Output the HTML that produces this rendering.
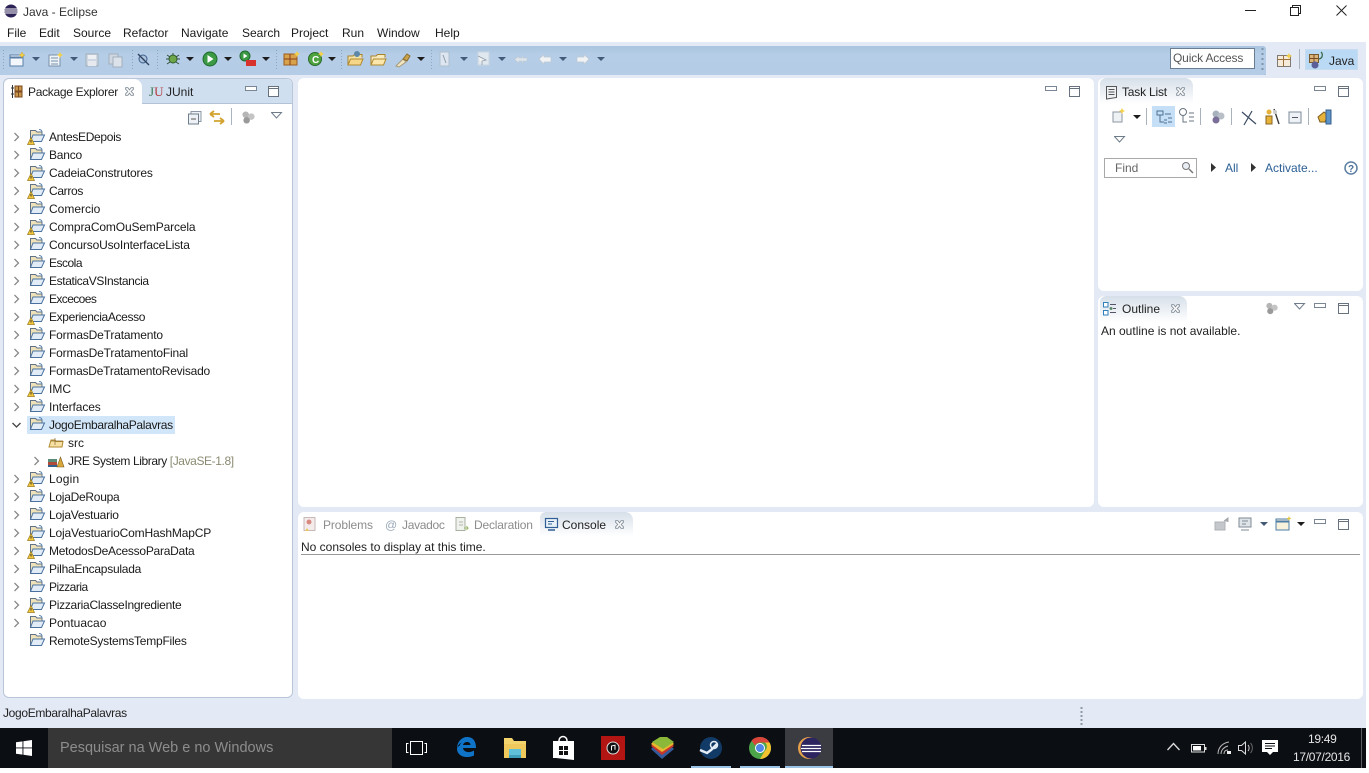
<!DOCTYPE html>
<html><head><meta charset="utf-8"><title>Java - Eclipse</title>
<style>
html,body{margin:0;padding:0;background:#fff}
#r{position:relative;width:1369px;height:773px;overflow:hidden;background:#fff;font-family:"Liberation Sans",sans-serif;font-size:12px;color:#1a1a1a}
#w{position:absolute;left:0;top:0;width:1366px;height:768px;overflow:hidden;background:#e3e9f5}
.a{position:absolute}
.t{position:absolute;white-space:nowrap;line-height:16px;height:16px}
.g{color:#8c8c8c}
.p{position:absolute;background:#fff;border-radius:6px}
svg{position:absolute;overflow:visible}
</style></head><body><div id="r"><div id="w">
<svg width="0" height="0" style="position:absolute">
<defs>
<symbol id="fo" viewBox="0 0 18 16"><path d="M2.500 13.500V2.500h5l1.500 1.500h5v3" fill="#efe2b8" stroke="#5f7288"/><path d="M2.500 13.500l2.500-6.500h11.500l-3 6.500z" fill="#e2ecf6" stroke="#4a72a0"/><path d="M11 1.500c2 0 3 1 3 3" fill="none" stroke="#5c86b0"/></symbol>
<symbol id="wa" viewBox="0 0 8 8"><path d="M4 .5L7.500 7.500H.5z" fill="#f5c83c" stroke="#9a7b1c" stroke-width=".7"/><path d="M4 3v2.500" stroke="#333"/></symbol>
<symbol id="ch" viewBox="0 0 8 10"><path d="M1.500 1l4 4-4 4" fill="none" stroke="#8a8a8a" stroke-width="1.300"/></symbol>
<symbol id="cl" viewBox="0 0 10 10"><path d="M1.500 1.500l2 0 1.500 2 1.500-2 2 0 0 1.500-2 2 2 2 0 1.500-2 0-1.500-2-1.500 2-2 0 0-1.500 2-2-2-2z" fill="#fff" stroke="#7f8a96" stroke-width=".8"/></symbol>
<symbol id="mn" viewBox="0 0 12 6"><rect x=".5" y=".5" width="11" height="4" fill="#fff" stroke="#7a8694"/></symbol>
<symbol id="mx" viewBox="0 0 11 11"><rect x=".5" y=".5" width="10" height="10" fill="#fff" stroke="#68727e"/><path d="M.5 2.500h10" stroke="#68727e"/></symbol>
<symbol id="dd" viewBox="0 0 8 4"><path d="M0 0h8L4 4z" fill="#445a78"/></symbol>
<symbol id="db" viewBox="0 0 8 4"><path d="M0 0h8L4 4z" fill="#1c1c1c"/></symbol>
<symbol id="tv" viewBox="0 0 12 7"><path d="M.5.500h10L5.500 6z" fill="#fff" stroke="#6f7c8a"/></symbol>
<symbol id="gr" viewBox="0 0 16 14"><circle cx="5" cy="4" r="3.500" fill="#b6b6b6"/><circle cx="11" cy="6" r="3.500" fill="#c4c4c4"/><circle cx="6" cy="10" r="3.500" fill="#9a9a9a"/></symbol>
</defs></svg>

<!-- title bar -->
<div class="a" style="left:0;top:0;width:1366px;height:42px;background:#fff"></div>
<svg style="left:4px;top:4px" width="14" height="14" viewBox="0 0 14 14"><circle cx="7" cy="7" r="6.500" fill="#2c2255"/><path d="M.8 5h12.400M.5 7h13M.8 9h12.400" stroke="#fff"/></svg>
<div class="t" style="left:23px;top:4px;color:#333">Java - Eclipse</div>
<svg style="left:1245px;top:10px" width="11" height="1"><path d="M0 .5h11" stroke="#222"/></svg>
<svg style="left:1290px;top:5px" width="11" height="11"><path d="M.5 2.500h8v8h-8zM2.500 2.500v-2h8v8h-2" fill="none" stroke="#222"/></svg>
<svg style="left:1336px;top:5px" width="11" height="11"><path d="M.5.500l10 10M10.500.500l-10 10" stroke="#222"/></svg>
<div class="t" style="left:7px;top:24.500px;color:#1a1a1a">File</div>
<div class="t" style="left:39px;top:24.500px">Edit</div>
<div class="t" style="left:73px;top:24.500px">Source</div>
<div class="t" style="left:123px;top:24.500px">Refactor</div>
<div class="t" style="left:181px;top:24.500px">Navigate</div>
<div class="t" style="left:242px;top:24.500px">Search</div>
<div class="t" style="left:291px;top:24.500px">Project</div>
<div class="t" style="left:342px;top:24.500px">Run</div>
<div class="t" style="left:377px;top:24.500px">Window</div>
<div class="t" style="left:435px;top:24.500px">Help</div>

<!-- toolbar -->
<div class="a" style="left:0;top:42px;width:1366px;height:36px;background:#e3e9f5"></div>
<div class="a" style="left:0;top:46px;width:1266px;height:29px;background:linear-gradient(#abc4df,#b5cde7 30%,#b4cce6);border-bottom:1px solid #8ba5c4;border-radius:0 3px 3px 0"></div>
<div class="a" style="left:0;top:75px;width:1266px;height:3px;background:#e3e9f5"></div>

<svg style="left:0;top:46px" width="1366" height="30" viewBox="0 46 1366 30">
<g stroke="#8fa6c0" stroke-dasharray="1 2"><path d="M3.500 50v19M132.500 50v19M157.500 50v19M276.500 50v19M341.500 50v19M431.500 50v19"/></g>
<!-- new -->
<rect x="10" y="55" width="13" height="11" fill="#f3f7fb" stroke="#5b7fa8"/><path d="M10 57.500h13" stroke="#5b7fa8" stroke-width="2"/><path d="M22 52l1 2 2 1-2 1-1 2-1-2-2-1 2-1z" fill="#f4d04a" stroke="#c49a20" stroke-width=".4"/>
<use href="#dd" x="32" y="57" width="8" height="4"/>
<rect x="49" y="55" width="11" height="11" fill="#eef3f8" stroke="#7890aa"/><path d="M51 58h7M51 61h7M51 64h7" stroke="#7890aa"/><path d="M60 52l1 2 2 1-2 1-1 2-1-2-2-1 2-1z" fill="#f4d04a"/>
<use href="#dd" x="70" y="57" width="8" height="4"/>
<rect x="86" y="54" width="12" height="12" fill="#cfd8e2" stroke="#a3afbc"/><rect x="88" y="55" width="8" height="4" fill="#eef1f4"/><rect x="88" y="61" width="8" height="5" fill="#e6eaee"/>
<rect x="109" y="54" width="9" height="10" fill="#cfd8e2" stroke="#a3afbc"/><rect x="113" y="57" width="9" height="10" fill="#dbe2ea" stroke="#a3afbc"/>
<!-- skip bp -->
<circle cx="143" cy="59" r="4" fill="#aac2dc" stroke="#3d5f8a"/><path d="M138 54l11 11" stroke="#2c3f5c" stroke-width="1.300"/>
<!-- debug -->
<circle cx="173" cy="59" r="4" fill="#6ea64a" stroke="#2f5e2b"/><path d="M167 55l3 2M179 55l-3 2M166 59h3M180 59h-3M167 64l3-2M179 64l-3-2M173 53v2" stroke="#33503a"/>
<use href="#db" x="186" y="57" width="8" height="4"/>
<!-- run -->
<circle cx="210" cy="59" r="7" fill="#3b9a43" stroke="#1f6a2e"/><path d="M207.500 55l6 4-6 4z" fill="#fff"/>
<use href="#db" x="224" y="57" width="8" height="4"/>
<circle cx="245" cy="56" r="5" fill="#3b9a43" stroke="#1f6a2e"/><path d="M243.500 53.500l4 2.500-4 2.500z" fill="#fff"/><rect x="246" y="60" width="10" height="6" fill="#d8322c"/>
<use href="#db" x="262" y="57" width="8" height="4"/>
<!-- package -->
<rect x="284" y="54" width="13" height="11" fill="#d8a24a" stroke="#9a5c20"/><path d="M290 54v11M284 59h13" stroke="#8a3f1c"/><path d="M297 51l1 2 2 1-2 1-1 2-1-2-2-1 2-1z" fill="#f4d04a"/>
<circle cx="315" cy="59" r="6.500" fill="#4da33e" stroke="#2a6a2a"/><text x="312" y="63" font-size="10" font-weight="bold" fill="#fff" font-family="Liberation Sans">C</text><path d="M321 51l1 2 2 1-2 1-1 2-1-2-2-1 2-1z" fill="#f4d04a"/>
<use href="#db" x="328" y="57" width="8" height="4"/>
<!-- open folder -->
<path d="M348 65V56h5l1.500-1.500H362v3" fill="#f3e3a8" stroke="#a9822c"/><path d="M348 65l2.500-6h12.500l-2.500 6z" fill="#f6d78a" stroke="#b28a2e"/><circle cx="357" cy="54" r="3" fill="#5d87a8"/>
<path d="M371 65V56h5l1.500-1.500H385v3" fill="#f7eabc" stroke="#a9822c"/><path d="M371 65l2.500-6h12.500l-2.500 6z" fill="#fbe7ab" stroke="#b28a2e"/>
<path d="M396 66l7-7 3 3-7 5z" fill="#f2e6c2" stroke="#a49a7a"/><path d="M403 59l4-5 3 2-3 5z" fill="#c9a24a" stroke="#8a6d2c"/>
<use href="#db" x="417" y="57" width="8" height="4"/>
<!-- faded -->
<rect x="440" y="52" width="9" height="14" fill="#dde6f0" stroke="#b0bfce"/><path d="M443 55l3 8" stroke="#8d9aa8"/>
<use href="#dd" x="460" y="57" width="8" height="4"/>
<rect x="478" y="52" width="11" height="13" fill="#dfe7ef" stroke="#cad5e0"/><path d="M478 56l8 4-4 1 0 4" fill="#f3f3f3" stroke="#8d9aa8" stroke-width=".8"/>
<use href="#dd" x="498" y="57" width="8" height="4"/>
<path d="M515 59l4-3v2h3v-2h1v2h4v3h-4v2h-1v-2h-3v2l-4-3z" fill="#dfe5ea" stroke="#bcc8d4" stroke-width=".6"/>
<path d="M539 59l5-4.500V57h7v5h-7v2.500z" fill="#f0f2f4" stroke="#bcc8d4" stroke-width=".7"/>
<use href="#dd" x="559" y="57" width="8" height="4"/>
<path d="M589 59l-5-4.500V57h-7v5h7v2.500z" fill="#f0f2f4" stroke="#bcc8d4" stroke-width=".7"/>
<use href="#dd" x="597" y="57" width="8" height="4"/>
</svg>

<div class="a" style="left:1170px;top:48px;width:83px;height:19px;background:#fff;border:1px solid #6b7d90"></div>
<div class="t" style="left:1173px;top:50px;color:#555;letter-spacing:-.15px">Quick Access</div>
<svg style="left:1260px;top:47px" width="5" height="24"><path d="M2.500 1v22" stroke="#8094ab" stroke-dasharray="2 3" stroke-width="2"/></svg>
<svg style="left:1277px;top:53px" width="16" height="14" viewBox="0 0 16 14"><rect x=".5" y="2.500" width="13" height="11" fill="#f5ebd8" stroke="#7f7b72"/><path d="M.5 6.500h13M6.500 2.500v11" stroke="#9a6f3a"/><path d="M12 0l1 2 2 1-2 1-1 2-1-2-2-1 2-1z" fill="#f4d04a"/></svg>
<div class="a" style="left:1299px;top:49px;width:1px;height:20px;background:#a9b4c2"></div>
<div class="a" style="left:1305px;top:49px;width:53px;height:21px;background:#b9d9f5;border:1px solid #c8dcf0;box-sizing:border-box"></div>
<svg style="left:1309px;top:52px" width="16" height="17" viewBox="0 0 16 17"><rect x=".5" y="2.500" width="9" height="8" fill="#d8b47a" stroke="#7a5a2c"/><path d="M5 2.500v8M.5 6.500h9" stroke="#7a4a20"/><circle cx="6" cy="13" r="3.500" fill="#5a5f9a"/><path d="M12 0c2 2 2 6-2 7" fill="none" stroke="#3a6a4a" stroke-width="1.300"/></svg>
<div class="t" style="left:1329px;top:53px;color:#222">Java</div>

<!-- Left panel -->
<div class="p" style="left:3px;top:78px;width:288px;height:618px;border:1px solid #b8c6d8;box-sizing:content-box"></div>
<div class="a" style="left:4px;top:79px;width:288px;height:25px;background:#cfdff0;border-radius:6px 6px 0 0;border-bottom:1px solid #b4c4d8;box-sizing:border-box"></div>
<div class="a" style="left:4px;top:79px;width:138px;height:25px;background:#fff;border-radius:6px 8px 0 0"></div>
<svg style="left:11px;top:85px" width="12" height="13" viewBox="0 0 12 13"><path d="M1.500 0v13" stroke="#333"/><path d="M0 3h3M0 9h3" stroke="#333"/><rect x="4" y="1" width="7" height="5" fill="#c9964a" stroke="#7a4a20"/><rect x="4" y="7" width="7" height="5" fill="#c9964a" stroke="#7a4a20"/><path d="M7.500 1v11" stroke="#7a4a20"/></svg>
<div class="t" style="left:28px;top:84px;color:#222;letter-spacing:-.3px">Package Explorer</div>
<svg style="left:124px;top:86px" width="11" height="11"><use href="#cl" width="11" height="11"/></svg>
<div class="t" style="left:149px;top:84px;font-family:'Liberation Serif',serif;font-size:13px;color:#3c7a52">J<span style="color:#b23a3a">U</span></div>
<div class="t" style="left:166px;top:84px;color:#222">JUnit</div>
<svg style="left:245px;top:86px" width="12" height="6"><use href="#mn" width="12" height="6"/></svg>
<svg style="left:268px;top:86px" width="11" height="11"><use href="#mx" width="11" height="11"/></svg>
<svg style="left:188px;top:111px" width="14" height="14" viewBox="0 0 14 14"><rect x="3" y=".5" width="10" height="10" fill="#eef2f6" stroke="#8c98a6"/><rect x=".5" y="3" width="10" height="10" fill="#eef2f6" stroke="#6f7d8c"/><path d="M3 8h5" stroke="#555"/></svg>
<svg style="left:209px;top:110px" width="16" height="15" viewBox="0 0 16 15"><path d="M1 4h10M1 4l4-3M1 4l4 3M15 11H5M15 11l-4-3M15 11l-4 3" fill="none" stroke="#d2a32e" stroke-width="1.800"/></svg>
<div class="a" style="left:231px;top:108px;width:1px;height:17px;background:#aab4c0"></div>
<svg style="left:241px;top:111px" width="15" height="13"><use href="#gr" width="15" height="13"/></svg>
<svg style="left:271px;top:112px" width="12" height="7"><use href="#tv" width="12" height="7"/></svg>

<!-- tree -->
<div class="a" style="left:27px;top:416px;width:148px;height:18px;background:#d1e6f8"></div>
<svg style="left:0;top:127px" width="290" height="530" viewBox="0 127 290 530">
<use href="#ch" x="13" y="132" width="8" height="10"/><use href="#fo" x="28" y="128" width="18" height="16"/><use href="#wa" x="27" y="137" width="8" height="8"/>
<use href="#ch" x="13" y="150" width="8" height="10"/><use href="#fo" x="28" y="146" width="18" height="16"/>
<use href="#ch" x="13" y="168" width="8" height="10"/><use href="#fo" x="28" y="164" width="18" height="16"/><use href="#wa" x="27" y="173" width="8" height="8"/>
<use href="#ch" x="13" y="186" width="8" height="10"/><use href="#fo" x="28" y="182" width="18" height="16"/><use href="#wa" x="27" y="191" width="8" height="8"/>
<use href="#ch" x="13" y="204" width="8" height="10"/><use href="#fo" x="28" y="200" width="18" height="16"/>
<use href="#ch" x="13" y="222" width="8" height="10"/><use href="#fo" x="28" y="218" width="18" height="16"/><use href="#wa" x="27" y="227" width="8" height="8"/>
<use href="#ch" x="13" y="240" width="8" height="10"/><use href="#fo" x="28" y="236" width="18" height="16"/>
<use href="#ch" x="13" y="258" width="8" height="10"/><use href="#fo" x="28" y="254" width="18" height="16"/>
<use href="#ch" x="13" y="276" width="8" height="10"/><use href="#fo" x="28" y="272" width="18" height="16"/>
<use href="#ch" x="13" y="294" width="8" height="10"/><use href="#fo" x="28" y="290" width="18" height="16"/>
<use href="#ch" x="13" y="312" width="8" height="10"/><use href="#fo" x="28" y="308" width="18" height="16"/><use href="#wa" x="27" y="317" width="8" height="8"/>
<use href="#ch" x="13" y="330" width="8" height="10"/><use href="#fo" x="28" y="326" width="18" height="16"/>
<use href="#ch" x="13" y="348" width="8" height="10"/><use href="#fo" x="28" y="344" width="18" height="16"/>
<use href="#ch" x="13" y="366" width="8" height="10"/><use href="#fo" x="28" y="362" width="18" height="16"/>
<use href="#ch" x="13" y="384" width="8" height="10"/><use href="#fo" x="28" y="380" width="18" height="16"/><use href="#wa" x="27" y="389" width="8" height="8"/>
<use href="#ch" x="13" y="402" width="8" height="10"/><use href="#fo" x="28" y="398" width="18" height="16"/>
<path d="M12.500 423l4 4 4-4" fill="none" stroke="#444" stroke-width="1.300"/><use href="#fo" x="28" y="416" width="18" height="16"/>
<path d="M49 447l2-7h4l1 1.500h7l-1 5.500z" fill="#f7e0a4" stroke="#b08a30"/><path d="M55 438v7M51 441h12" stroke="#8a6a2a" stroke-width=".7"/>
<use href="#ch" x="33" y="456" width="8" height="10"/><rect x="48" y="459" width="9" height="3" fill="#5a8c7a"/><rect x="48" y="462" width="9" height="3" fill="#b04a3a"/><rect x="48" y="465" width="9" height="2" fill="#35608a"/><path d="M57 467l3.500-10 3.500 10z" fill="#d8a83a" stroke="#7a5a1a" stroke-width=".6"/>
<use href="#ch" x="13" y="474" width="8" height="10"/><use href="#fo" x="28" y="470" width="18" height="16"/><use href="#wa" x="27" y="479" width="8" height="8"/>
<use href="#ch" x="13" y="492" width="8" height="10"/><use href="#fo" x="28" y="488" width="18" height="16"/>
<use href="#ch" x="13" y="510" width="8" height="10"/><use href="#fo" x="28" y="506" width="18" height="16"/>
<use href="#ch" x="13" y="528" width="8" height="10"/><use href="#fo" x="28" y="524" width="18" height="16"/><use href="#wa" x="27" y="533" width="8" height="8"/>
<use href="#ch" x="13" y="546" width="8" height="10"/><use href="#fo" x="28" y="542" width="18" height="16"/><use href="#wa" x="27" y="551" width="8" height="8"/>
<use href="#ch" x="13" y="564" width="8" height="10"/><use href="#fo" x="28" y="560" width="18" height="16"/>
<use href="#ch" x="13" y="582" width="8" height="10"/><use href="#fo" x="28" y="578" width="18" height="16"/>
<use href="#ch" x="13" y="600" width="8" height="10"/><use href="#fo" x="28" y="596" width="18" height="16"/><use href="#wa" x="27" y="605" width="8" height="8"/>
<use href="#ch" x="13" y="618" width="8" height="10"/><use href="#fo" x="28" y="614" width="18" height="16"/>
<use href="#fo" x="28" y="632" width="18" height="16"/>
</svg>
<div class="t" style="left:49px;top:129px;letter-spacing:-.33px">AntesEDepois</div>
<div class="t" style="left:49px;top:147px;letter-spacing:-.2px">Banco</div>
<div class="t" style="left:49px;top:165px;letter-spacing:-.17px">CadeiaConstrutores</div>
<div class="t" style="left:49px;top:183px;letter-spacing:-.33px">Carros</div>
<div class="t" style="left:49px;top:201px">Comercio</div>
<div class="t" style="left:49px;top:219px;letter-spacing:-.14px">CompraComOuSemParcela</div>
<div class="t" style="left:49px;top:237px;letter-spacing:-.16px">ConcursoUsoInterfaceLista</div>
<div class="t" style="left:49px;top:255px;letter-spacing:-.5px">Escola</div>
<div class="t" style="left:49px;top:273px;letter-spacing:-.37px">EstaticaVSInstancia</div>
<div class="t" style="left:49px;top:291px;letter-spacing:-.6px">Excecoes</div>
<div class="t" style="left:49px;top:309px;letter-spacing:-.35px">ExperienciaAcesso</div>
<div class="t" style="left:49px;top:327px;letter-spacing:-.17px">FormasDeTratamento</div>
<div class="t" style="left:49px;top:345px;letter-spacing:-.17px">FormasDeTratamentoFinal</div>
<div class="t" style="left:49px;top:363px;letter-spacing:-.23px">FormasDeTratamentoRevisado</div>
<div class="t" style="left:49px;top:381px">IMC</div>
<div class="t" style="left:49px;top:399px;letter-spacing:-.1px">Interfaces</div>
<div class="t" style="left:49px;top:417px;letter-spacing:-.33px">JogoEmbaralhaPalavras</div>
<div class="t" style="left:68px;top:435px">src</div>
<div class="t" style="left:68px;top:453px;letter-spacing:-.4px">JRE System Library <span style="color:#8a8a72">[JavaSE-1.8]</span></div>
<div class="t" style="left:49px;top:471px;letter-spacing:.2px">Login</div>
<div class="t" style="left:49px;top:489px;letter-spacing:-.27px">LojaDeRoupa</div>
<div class="t" style="left:49px;top:507px;letter-spacing:-.23px">LojaVestuario</div>
<div class="t" style="left:49px;top:525px;letter-spacing:-.16px">LojaVestuarioComHashMapCP</div>
<div class="t" style="left:49px;top:543px;letter-spacing:-.26px">MetodosDeAcessoParaData</div>
<div class="t" style="left:49px;top:561px;letter-spacing:-.25px">PilhaEncapsulada</div>
<div class="t" style="left:49px;top:579px;letter-spacing:-.5px">Pizzaria</div>
<div class="t" style="left:49px;top:597px;letter-spacing:-.28px">PizzariaClasseIngrediente</div>
<div class="t" style="left:49px;top:615px">Pontuacao</div>
<div class="t" style="left:49px;top:633px;letter-spacing:-.23px">RemoteSystemsTempFiles</div>

<!-- Editor -->
<div class="p" style="left:298px;top:78px;width:796px;height:429px"></div>
<svg style="left:1045px;top:86px" width="12" height="6"><use href="#mn" width="12" height="6"/></svg>
<svg style="left:1069px;top:86px" width="11" height="11"><use href="#mx" width="11" height="11"/></svg>

<!-- Task list -->
<div class="p" style="left:1098px;top:78px;width:265px;height:213px"></div>
<div class="a" style="left:1100px;top:78px;width:93px;height:26px;background:linear-gradient(#d6dfe9,#fff);border-radius:6px 8px 0 0"></div>
<svg style="left:1106px;top:85px" width="11" height="15" viewBox="0 0 11 15"><path d="M.5 1.500h10v11l-10 1.500z" fill="#eef1f4" stroke="#555"/><path d="M2.500 4.500h6M2.500 7h6M2.500 9.500h6" stroke="#555"/></svg>
<div class="t" style="left:1122px;top:84px;color:#222;letter-spacing:-.2px">Task List</div>
<svg style="left:1175px;top:86px" width="11" height="11"><use href="#cl" width="11" height="11"/></svg>
<svg style="left:1314px;top:86px" width="12" height="6"><use href="#mn" width="12" height="6"/></svg>
<svg style="left:1338px;top:86px" width="11" height="11"><use href="#mx" width="11" height="11"/></svg>
<svg style="left:1100px;top:106px" width="260" height="42" viewBox="1100 106 260 42">
<path d="M1113 122v-10h9v10z" fill="#eef2f5" stroke="#8c96a0"/><path d="M1122 108l1 2 2 1-2 1-1 2-1-2-2-1 2-1z" fill="#f4d04a"/>
<use href="#db" x="1133" y="115" width="8" height="4"/>
<path d="M1146.500 108v17M1200.500 108v17M1231.500 108v17M1308.500 108v17" stroke="#aab2bc"/>
<rect x="1152" y="106" width="23" height="21" fill="#c4dff6"/>
<path d="M1157 111h6v4h-6zM1160 115v7h4M1164 120h3M1164 123h3M1165 114h6M1168 118h4M1168 122h4" fill="none" stroke="#4f7292"/>
<circle cx="1183" cy="112" r="3.500" fill="#fff" stroke="#6a7582"/><path d="M1183 115v7h4M1189 113h5M1189 117h5M1189 121h5" fill="none" stroke="#6a7582"/>
<circle cx="1216" cy="114" r="3.500" fill="#a8b2bc"/><circle cx="1221" cy="116" r="3.500" fill="#b8bfc6"/><circle cx="1216" cy="120" r="3.500" fill="#7a6f98"/>
<path d="M1242 112l14 12M1252 111l-8 14" stroke="#3a4b62" stroke-width="1.200"/>
<circle cx="1269" cy="112" r="2.500" fill="#e6b23a"/><path d="M1266 124v-8h6v8z" fill="#e6b23a" stroke="#8a6420"/><path d="M1274 109l5 15" stroke="#333" stroke-width="1.300"/><circle cx="1275" cy="112" r="2" fill="#ccc"/>
<rect x="1289" y="112" width="12" height="11" fill="#eef2f6" stroke="#7d8a98"/><path d="M1292 117.500h6" stroke="#556"/>
<path d="M1318 117l6-5 4 3-3 7h-5z" fill="#e6b23a" stroke="#7a5c1c"/><rect x="1326" y="110" width="5" height="14" fill="#5c93c8" stroke="#345f8c"/>
</svg>
<svg style="left:1114px;top:136px" width="12" height="7"><use href="#tv" width="12" height="7"/></svg>
<div class="a" style="left:1104px;top:158px;width:91px;height:18px;background:#fff;border:1px solid #a9a9a9"></div>
<div class="t" style="left:1115px;top:160px;color:#666">Find</div>
<svg style="left:1181px;top:161px" width="13" height="13"><circle cx="5" cy="5" r="3.500" fill="#e8eef4" stroke="#777"/><path d="M8 8l4 4" stroke="#777" stroke-width="1.500"/></svg>
<svg style="left:1210px;top:163px" width="50" height="9"><path d="M1 0l5 4.500L1 9zM41 0l5 4.500L41 9z" fill="#333"/></svg>
<div class="t" style="left:1225px;top:160px;color:#2c5f94">All</div>
<div class="t" style="left:1265px;top:160px;color:#2c5f94">Activate...</div>
<svg style="left:1344px;top:161px" width="14" height="14"><circle cx="7" cy="7" r="6" fill="#fff" stroke="#5c7fa4" stroke-width="1.500"/><text x="4" y="11" font-size="10" font-weight="bold" fill="#4a6f96" font-family="Liberation Sans">?</text></svg>

<!-- Outline -->
<div class="p" style="left:1098px;top:296px;width:265px;height:211px"></div>
<div class="a" style="left:1100px;top:296px;width:87px;height:26px;background:linear-gradient(#d6dfe9,#fff);border-radius:6px 8px 0 0"></div>
<svg style="left:1103px;top:302px" width="14" height="14" viewBox="0 0 14 14"><rect x=".5" y=".5" width="4.500" height="4.500" fill="#fff" stroke="#2f7fb8"/><rect x=".5" y="8.500" width="4.500" height="4.500" fill="#fff" stroke="#2f7fb8"/><circle cx="8" cy="6.500" r="1.500" fill="#5c8a6a"/><path d="M7 2.500h6M10 6.500h3M7 10.500h6" stroke="#556"/></svg>
<div class="t" style="left:1122px;top:301px;color:#222">Outline</div>
<svg style="left:1170px;top:303px" width="11" height="11"><use href="#cl" width="11" height="11"/></svg>
<svg style="left:1265px;top:302px" width="14" height="13"><use href="#gr" width="14" height="13"/></svg>
<svg style="left:1294px;top:303px" width="12" height="7"><use href="#tv" width="12" height="7"/></svg>
<svg style="left:1314px;top:303px" width="12" height="6"><use href="#mn" width="12" height="6"/></svg>
<svg style="left:1338px;top:303px" width="11" height="11"><use href="#mx" width="11" height="11"/></svg>
<div class="t" style="left:1101px;top:323px;color:#222">An outline is not available.</div>

<!-- Console -->
<div class="p" style="left:298px;top:512px;width:1065px;height:187px"></div>
<div class="a" style="left:540px;top:512px;width:93px;height:24px;background:linear-gradient(#d6dfe9,#fff);border-radius:6px 8px 0 0"></div>
<svg style="left:303px;top:517px" width="14" height="15" viewBox="0 0 14 15"><rect x="1" y=".5" width="11" height="13" fill="#f4ecec" stroke="#c8b8b8"/><circle cx="6" cy="5" r="2.500" fill="#d88a80"/><path d="M2 14l2-3 2 3z" fill="#e8c860"/></svg>
<div class="t g" style="left:323px;top:517px;letter-spacing:-.1px">Problems</div>
<div class="t g" style="left:385px;top:517px;color:#9aa8b8">@</div>
<div class="t g" style="left:402px;top:517px;letter-spacing:-.3px">Javadoc</div>
<svg style="left:455px;top:517px" width="15" height="15" viewBox="0 0 15 15"><path d="M1 .5h9v13H1z" fill="#f0f2ee" stroke="#a8b0a0"/><path d="M4 5h4M4 8h4" stroke="#b0b8a8"/><path d="M9 11h4l-1.500-2M13 11l-1.500 2" stroke="#9ab86a" fill="none"/></svg>
<div class="t g" style="left:474px;top:517px;letter-spacing:-.18px">Declaration</div>
<svg style="left:545px;top:518px" width="13" height="13" viewBox="0 0 13 13"><rect x=".5" y=".5" width="12" height="9" fill="#e8f0f8" stroke="#2f5f96" stroke-width="1.200"/><path d="M3 3.500h6M3 6h4" stroke="#2f5f96"/><path d="M3 12h7" stroke="#2f5f96" stroke-width="1.500"/></svg>
<div class="t" style="left:562px;top:517px;color:#222">Console</div>
<svg style="left:614px;top:519px" width="11" height="11"><use href="#cl" width="11" height="11"/></svg>
<svg style="left:1214px;top:516px" width="140" height="16" viewBox="1214 516 140 16">
<path d="M1215 522h10v8h-10z" fill="#c4c8cc" stroke="#aeb2b6"/><path d="M1224 521l4-3v4" fill="#a8acb0" stroke="#a0a4a8"/>
<rect x="1239" y="518" width="12" height="9" fill="#dfe4e8" stroke="#7e8994"/><path d="M1242 521h6M1242 524h4M1241 530h8" stroke="#7e8994"/>
<use href="#dd" x="1260" y="522" width="8" height="4"/>
<rect x="1276" y="519" width="13" height="11" fill="#f8f2dc" stroke="#4e7ca8"/><path d="M1276 521.500h13" stroke="#4e7ca8" stroke-width="2"/><path d="M1289 516l.8 1.700 1.700.8-1.700.8-.8 1.700-.8-1.700-1.700-.8 1.700-.8z" fill="#e8c840"/>
<use href="#db" x="1297" y="522" width="8" height="4"/>
</svg>
<svg style="left:1314px;top:519px" width="12" height="6"><use href="#mn" width="12" height="6"/></svg>
<svg style="left:1338px;top:519px" width="11" height="11"><use href="#mx" width="11" height="11"/></svg>
<div class="t" style="left:301px;top:539px;color:#222">No consoles to display at this time.</div>
<div class="a" style="left:301px;top:554px;width:1059px;height:1px;background:#9a9a9a"></div>

<!-- status -->
<div class="t" style="left:3px;top:705px;color:#222;letter-spacing:-.33px">JogoEmbaralhaPalavras</div>
<svg style="left:1080px;top:706px" width="3" height="20"><path d="M1.500 1v18" stroke="#8f99a6" stroke-width="2" stroke-dasharray="2 2"/></svg>

<!-- taskbar -->
<div class="a" style="left:0;top:728px;width:1366px;height:40px;background:#0b0e13"></div>
<div class="a" style="left:48px;top:728px;width:344px;height:40px;background:#363636"></div>
<svg style="left:16px;top:740px" width="16" height="16" viewBox="0 0 16 16"><path d="M0 2.300l6.500-.9v6.100H0zM7.400 1.300L16 0v7.500H7.400zM0 8.400h6.500v6.200L0 13.700zM7.400 8.400H16V16l-8.600-1.200z" fill="#fff"/></svg>
<div class="t" style="left:60px;top:739px;height:18px;line-height:18px;font-size:14.500px;color:#8d8d8d">Pesquisar na Web e no Windows</div>
<svg style="left:406px;top:741px" width="21" height="14" viewBox="0 0 21 14"><rect x="4.500" y=".5" width="12" height="13" fill="none" stroke="#fff"/><path d="M2.500 2.500H.5v9h2M18.500 2.500h2v9h-2" fill="none" stroke="#fff"/></svg>
<!-- edge -->
<svg style="left:456px;top:737px" width="21" height="21" viewBox="0 0 21 21"><path d="M1 10C2 4 6 0 11 0c6 0 9 4 9 11H7c.5 4 6 5.500 11 2.500v5c-6 3-16 2-17-6 0-3 2-6 5-7-1.500 1-2.500 2.500-2.500 3.500z M7 8h7.500c0-4-6.500-4-7.500 0z" fill="#0f74c8" fill-rule="evenodd"/></svg>
<!-- explorer -->
<svg style="left:504px;top:738px" width="22" height="20" viewBox="0 0 22 20"><path d="M0 0h8l2 3h12v17H0z" fill="#f3d36b"/><rect x="0" y="6" width="22" height="14" fill="#efc95c"/><rect x="5" y="11" width="12" height="6" fill="#5fc0d8"/><rect x="5" y="17" width="12" height="3" fill="#3e9fba"/></svg>
<!-- store -->
<svg style="left:553px;top:736px" width="21" height="24" viewBox="0 0 21 24"><path d="M0 5h21v19L3 22H0z" fill="#fff"/><path d="M6 5c0-6 8-6 8 0" fill="none" stroke="#fff" stroke-width="1.500"/><path d="M6 10h4v4H6zM11 10h4v4h-4zM6 15h4v4H6zM11 15h4v4h-4z" fill="#111"/></svg>
<!-- red -->
<div class="a" style="left:601px;top:736px;width:24px;height:24px;background:#b31512"></div>
<svg style="left:606px;top:741px" width="14" height="14" viewBox="0 0 14 14"><circle cx="7" cy="7" r="6" fill="#111" stroke="#ddd"/><path d="M5.500 9.500V5l3.500-.8v4.500" fill="none" stroke="#fff"/></svg>
<!-- bluestacks -->
<svg style="left:651px;top:737px" width="23" height="22" viewBox="0 0 23 22"><path d="M0 12l11 10 12-10-3-3H3z" fill="#345a9a"/><path d="M0 9l11 9 12-9-3-3H3z" fill="#c8362a"/><path d="M0 7l11 8 12-8-3-3H3z" fill="#e8b82e"/><path d="M1 5L9 0h7l7 5-11 7z" fill="#8cb83a"/></svg>
<!-- steam -->
<svg style="left:700px;top:737px" width="22" height="22" viewBox="0 0 22 22"><circle cx="11" cy="11" r="11" fill="#123a66"/><path d="M0 13l7 3 4-3 6-6" fill="none" stroke="#e4edf5" stroke-width="2.500"/><circle cx="14" cy="8" r="3.500" fill="none" stroke="#e4edf5" stroke-width="1.500"/></svg>
<!-- chrome -->
<svg style="left:749px;top:737px" width="22" height="22" viewBox="0 0 22 22"><circle cx="11" cy="11" r="11" fill="#4da54a"/><path d="M11 0a11 11 0 0 1 9.500 5.500H11a5.500 5.500 0 0 0-5 3L2.500 3.500A11 11 0 0 1 11 0z" fill="#d9453a"/><path d="M20.500 5.500A11 11 0 0 1 11 22l4.700-8A5.500 5.500 0 0 0 16 5.500z" fill="#f2c230"/><circle cx="11" cy="11" r="5" fill="#fff"/><circle cx="11" cy="11" r="4" fill="#4f86e8"/></svg>
<!-- active -->
<div class="a" style="left:785px;top:728px;width:48px;height:40px;background:#3a3c41"></div>
<div class="a" style="left:691px;top:766px;width:40px;height:2px;background:#9ac3e6"></div>
<div class="a" style="left:740px;top:766px;width:40px;height:2px;background:#9ac3e6"></div>
<div class="a" style="left:785px;top:766px;width:48px;height:2px;background:#9ac3e6"></div>
<svg style="left:797px;top:736px" width="25" height="24" viewBox="0 0 25 24"><circle cx="12" cy="12" r="11" fill="#e6a24a"/><circle cx="14" cy="12" r="10.500" fill="#2c2560"/><path d="M5 9.500h19M4 12.500h20M5 15.500h19" stroke="#fff" stroke-width="1.300"/></svg>
<!-- tray -->
<svg style="left:1167px;top:742px" width="13" height="9"><path d="M.5 8L6.500 1.500 12.500 8" fill="none" stroke="#ddd" stroke-width="1.300"/></svg>
<svg style="left:1191px;top:744px" width="16" height="9"><rect x=".5" y=".5" width="13" height="7.500" fill="#0b0e13" stroke="#ddd"/><rect x="2" y="2" width="8" height="4.500" fill="#fff"/><rect x="14" y="3" width="1.500" height="3" fill="#ddd"/></svg>
<svg style="left:1217px;top:741px" width="15" height="14" viewBox="0 0 15 14"><path d="M1 13c0-6 4-11 11-12M4 13c0-4 3-7 7-8M7 13c0-2 1-4 4-4" fill="none" stroke="#bbb"/><path d="M10 10h4v3h-4z" fill="#eee"/></svg>
<svg style="left:1238px;top:741px" width="16" height="14" viewBox="0 0 16 14"><path d="M.5 4.500h3L7.500 1v12l-4-3.500h-3z" fill="none" stroke="#ddd"/><path d="M10 4c1.500 1.500 1.500 4.500 0 6" fill="none" stroke="#ccc"/><path d="M12.500 2c2.500 3 2.500 7 0 10" fill="none" stroke="#666"/></svg>
<svg style="left:1262px;top:740px" width="16" height="16" viewBox="0 0 16 16"><path d="M0 0h16v12h-5l-3 3-3-3H0z" fill="#fff"/><path d="M3 3.500h10M3 6h10M3 8.500h7" stroke="#0b0e13"/></svg>
<div class="t" style="left:1308px;top:731px;color:#e6e6e6;letter-spacing:-.3px">19:49</div>
<div class="t" style="left:1293px;top:749px;color:#e6e6e6;letter-spacing:-.3px">17/07/2016</div>
<div class="a" style="left:1361px;top:728px;width:1px;height:40px;background:#5a5d62"></div>
</div></div></body></html>
